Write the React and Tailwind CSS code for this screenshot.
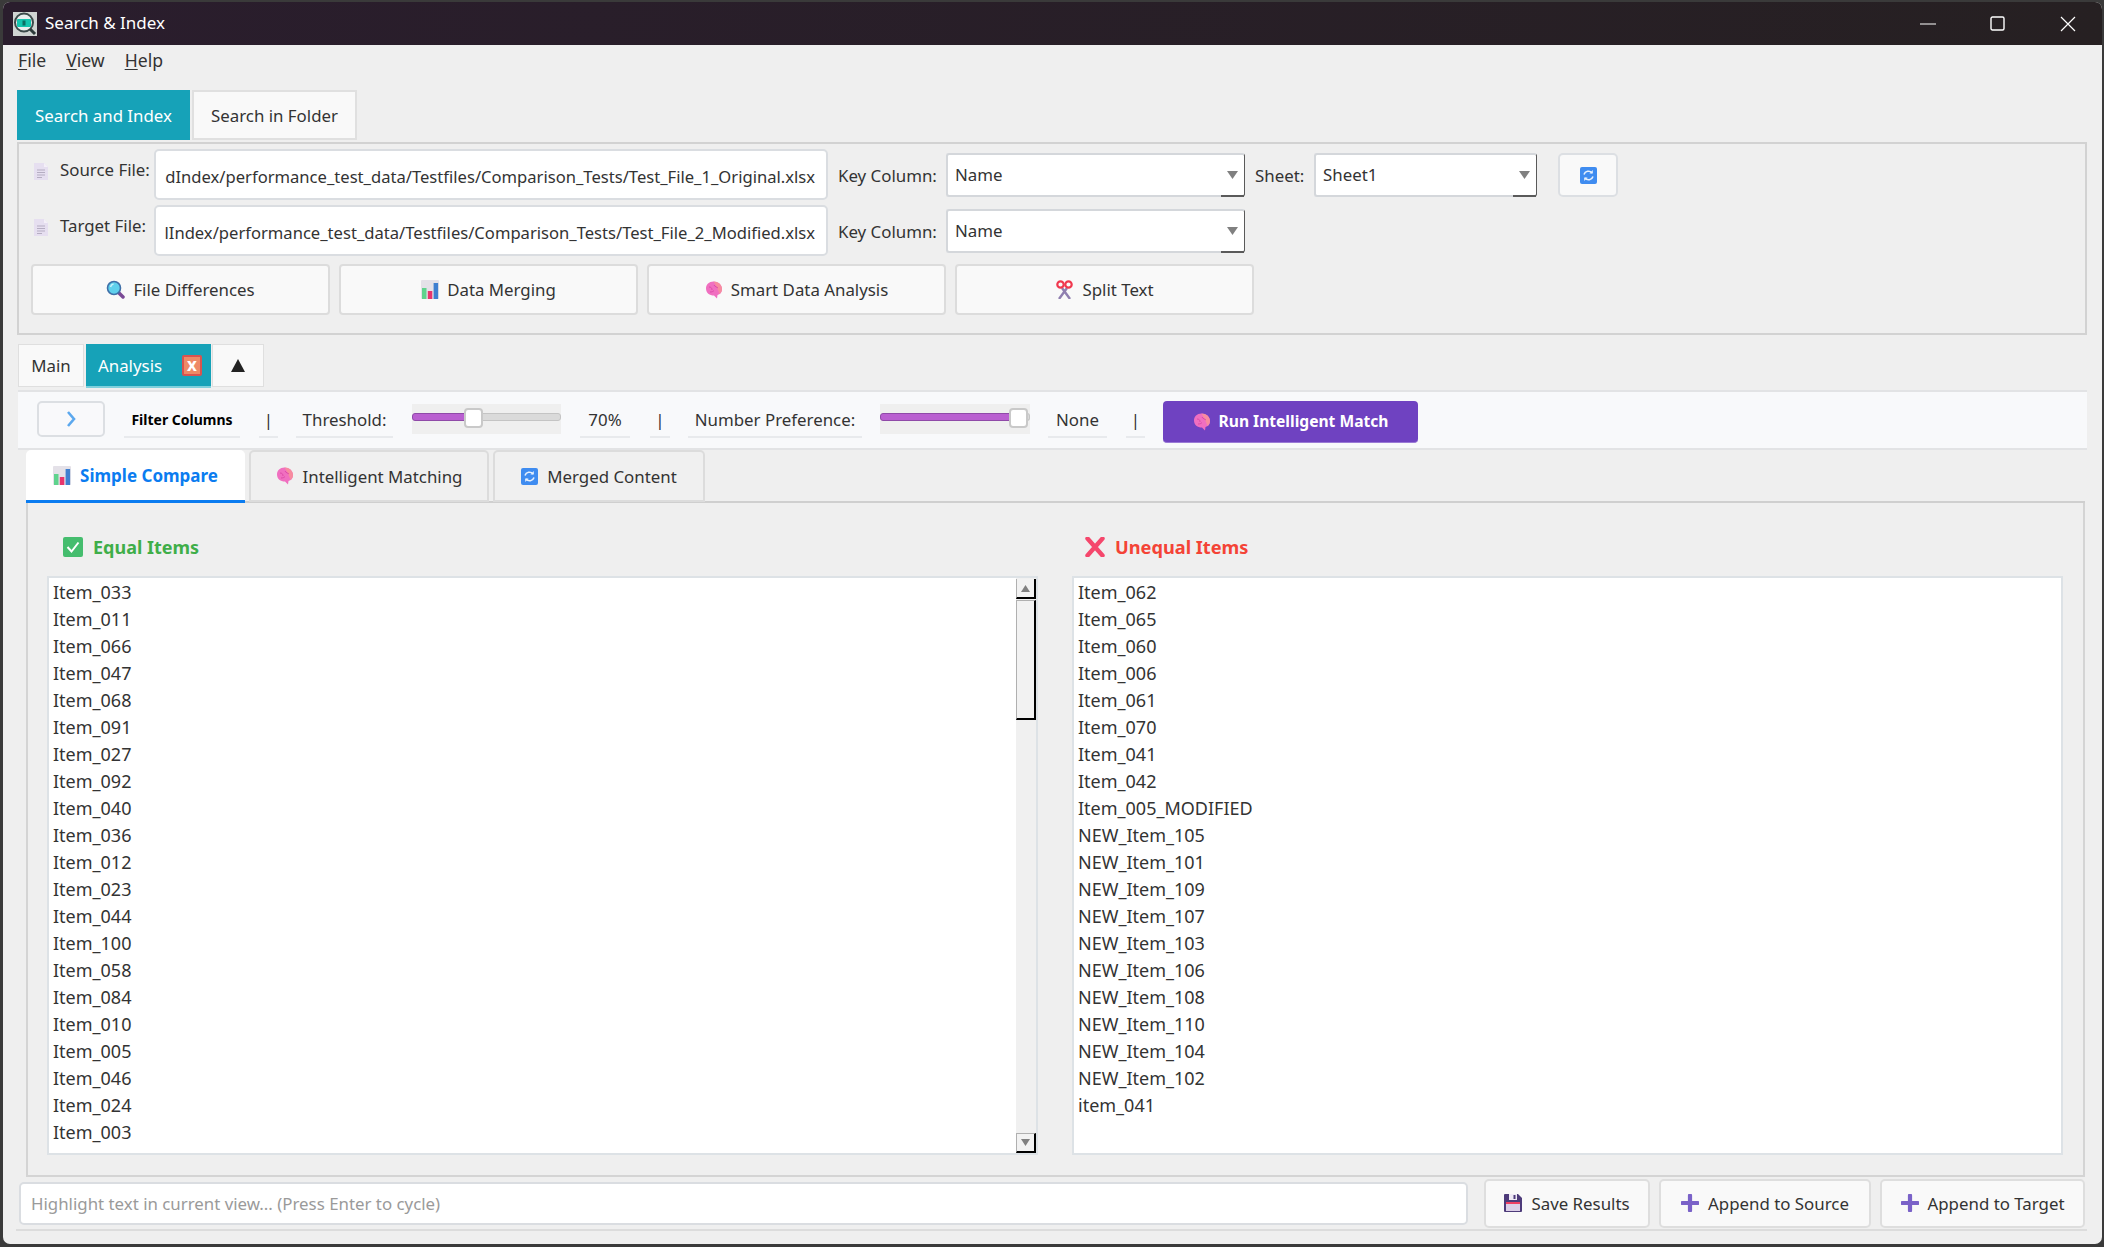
import React from "react";

const equalItems = ["Item_033","Item_011","Item_066","Item_047","Item_068","Item_091","Item_027","Item_092","Item_040","Item_036","Item_012","Item_023","Item_044","Item_100","Item_058","Item_084","Item_010","Item_005","Item_046","Item_024","Item_003","Item_093"];
const unequalItems = ["Item_062","Item_065","Item_060","Item_006","Item_061","Item_070","Item_041","Item_042","Item_005_MODIFIED","NEW_Item_105","NEW_Item_101","NEW_Item_109","NEW_Item_107","NEW_Item_103","NEW_Item_106","NEW_Item_108","NEW_Item_110","NEW_Item_104","NEW_Item_102","item_041"];

const AppIcon = () => (
  <svg width="24" height="24" viewBox="0 0 24 24" className="shrink-0">
    <rect width="24" height="24" fill="#cfd4d2" />
    <circle cx="11" cy="10.5" r="9" fill="#e8eeee" stroke="#3b4a4a" strokeWidth="2" />
    <rect x="4" y="7" width="14" height="8" rx="1" fill="#12c4ae" />
    <rect x="9.5" y="8.5" width="3" height="5" fill="#0b6e64" />
    <path d="M17 17l5 5" stroke="#2c3a3a" strokeWidth="3" />
  </svg>
);

const DocIcon = () => (
  <svg width="14" height="17" viewBox="0 0 14 17" className="shrink-0">
    <path d="M0 0h10l4 4v13H0z" fill="#e6dff0" />
    <path d="M10 0l4 4h-4z" fill="#f4f0f8" />
    <path d="M3 7h8M3 9.5h8M3 12h8M3 14.5h5" stroke="#b5adc2" strokeWidth="1" />
  </svg>
);

const SearchIcon = () => (
  <svg width="19" height="19" viewBox="0 0 19 19" className="shrink-0">
    <path d="M12 12l5 5" stroke="#7a4a96" strokeWidth="3.5" strokeLinecap="round" />
    <circle cx="8" cy="8" r="6.5" fill="#5fd0ec" stroke="#3f6fa8" strokeWidth="1.6" />
    <path d="M4.5 7a4 4 0 0 1 3-3" stroke="#c8f2fb" strokeWidth="1.5" fill="none" />
  </svg>
);

const ChartIcon = () => (
  <svg width="18" height="19" viewBox="0 0 18 19" className="shrink-0">
    <rect width="18" height="19" rx="1" fill="#e4e1e8" />
    <rect x="1" y="8" width="4.5" height="11" fill="#5fd38d" />
    <rect x="6.8" y="11" width="4.5" height="8" fill="#e8356d" />
    <rect x="12.6" y="3" width="4.5" height="16" fill="#3f7fd0" />
  </svg>
);

const BrainIcon = () => (
  <svg width="18" height="18" viewBox="0 0 18 18" className="shrink-0">
    <path d="M8.5 0.5c4.5 0 8.5 3 8.5 7.5 0 3.5-2 5.5-4.5 6l-.5 3.5-3-3C4.5 14.5 1 12 1 7.5 1 3.500 4 0.5 8.5 0.5z" fill="#f06fc0" />
    <path d="M8.5 0.5c4.5 0 8.5 3 8.5 7.5 0 2-1 4-2.5 5C13 8.5 11 4.500 8.5 0.5z" fill="#f78c9f" />
    <path d="M4 6c2 0 3 1 3 3M9 4c1 2 3 2 4 3M5 11c2 0 3-.5 4-1.5" stroke="#dd4aa8" strokeWidth="1" fill="none" />
  </svg>
);

const ScissorsIcon = () => (
  <svg width="19" height="19" viewBox="0 0 19 19" className="shrink-0">
    <path d="M7 8l8 11M12 8L4 19" stroke="#8f7fb0" strokeWidth="2.4" />
    <circle cx="5.5" cy="4.5" r="3.2" fill="none" stroke="#f0384f" strokeWidth="2.2" />
    <circle cx="13.5" cy="4.5" r="3.2" fill="none" stroke="#f0384f" strokeWidth="2.2" />
  </svg>
);

const RefreshIcon = () => (
  <svg width="17" height="17" viewBox="0 0 17 17" className="shrink-0">
    <rect width="17" height="17" rx="2" fill="#3f8cf0" />
    <path d="M4 7.5a4.6 4.6 0 0 1 8-1.5M13 9.5a4.6 4.6 0 0 1-8 1.5" stroke="#e6f0fd" strokeWidth="1.6" fill="none" />
    <path d="M12.8 3v3.6H9.4zM4.2 14v-3.6h3.4z" fill="#e6f0fd" />
  </svg>
);

const CheckIcon = () => (
  <svg width="20" height="20" viewBox="0 0 20 20" className="shrink-0">
    <rect width="20" height="20" rx="2" fill="#45bd6e" />
    <path d="M4.5 10l4 4.5 7-9" stroke="#fff" strokeWidth="2" fill="none" />
  </svg>
);

const CrossIcon = () => (
  <svg width="20" height="20" viewBox="0 0 20 20" className="shrink-0">
    <path d="M2.5 1.5L17.5 18.5M17.5 1.5L2.5 18.5" stroke="#f5476c" strokeWidth="4.4" strokeLinecap="round" />
  </svg>
);

const SaveIcon = () => (
  <svg width="18" height="18" viewBox="0 0 18 18" className="shrink-0">
    <path d="M0 1a1 1 0 0 1 1-1h13l4 4v13a1 1 0 0 1-1 1H1a1 1 0 0 1-1-1z" fill="#4d3b7a" />
    <rect x="5" y="0" width="8" height="6" fill="#efeaf6" />
    <rect x="9.5" y="1" width="2" height="4" fill="#4d3b7a" />
    <rect x="2" y="8" width="14" height="9" fill="#dccfe8" />
    <rect x="2" y="8" width="14" height="2" fill="#ef3f63" />
  </svg>
);

const PlusIcon = () => (
  <svg width="18" height="18" viewBox="0 0 18 18" className="shrink-0">
    <path d="M9 1.5v15M1.5 9h15" stroke="#7a62c8" strokeWidth="4.2" strokeLinecap="round" />
  </svg>
);

const Combo = ({ value, width }) => (
  <div className={`relative flex items-center h-[44px] pl-[7px] pb-[1px] bg-white border-2 border-[#d4d7db] border-r-[#5a5a5a] border-r rounded-[3px] text-[#333] ${width}`}>
    {value}
    <svg width="11" height="8" viewBox="0 0 11 8" className="absolute right-[6px] top-[16px]">
      <path d="M0 0h11L5.5 8z" fill="#808080" />
    </svg>
    <div className="absolute right-0 -bottom-[2px] w-[23px] h-[2px] bg-[#5a5a5a]" />
  </div>
);

const ActionButton = ({ icon, label }) => (
  <div className="flex items-center justify-center gap-[8px] w-[299px] h-[51px] bg-[#f9f9f9] border-2 border-[#dcdcdc] rounded-[4px] text-[#333]">
    {icon}
    {label}
  </div>
);

const FileRow = ({ label, path, children }) => (
  <div className="flex h-[51px]">
    <div className="mt-[14px]"><DocIcon /></div>
    <div className="ml-[12px] mt-[8px] w-[94px] whitespace-nowrap text-[#333]">{label}</div>
    <div className="flex items-center justify-end w-[674px] h-[51px] pt-[3px] pr-[11px] bg-white border-2 border-[#dadde1] rounded-[5px] text-[16.6px] text-[#333] overflow-hidden whitespace-nowrap">
      {path}
    </div>
    <div className="flex items-center h-[46px] mt-[3px]">{children}</div>
  </div>
);

const ToolLabel = ({ children, width, bold }) => (
  <div className={`flex items-center justify-center h-[34px] mt-[12px] pb-[2px] border-b-2 border-[#e8eaed] text-[#333] ${width} ${bold ? "font-bold text-[14px] text-black" : ""}`}>
    {children}
  </div>
);

const Slider = ({ fill, rest, width }) => (
  <div className={`flex items-start h-[30px] mt-[12px] bg-[#efefef] ${width}`}>
    <div className={`h-[8px] mt-[9px] bg-[#b95fd0] border border-[#8f4aa8] rounded-l-[3px] ${fill}`} />
    <div className="w-[19px] h-[20px] mt-[4px] -mx-px bg-white border-2 border-[#c9c9c9] rounded-[4px] z-10" />
    <div className={`h-[8px] mt-[9px] bg-[#dadada] border border-[#c4c4c4] rounded-r-[3px] ${rest}`} />
  </div>
);

const SubTab = ({ icon, label, width, active }) => (
  active ? (
    <div className={`flex items-center justify-center gap-[9px] h-[53px] bg-white border-b-[3px] border-[#0b7cf0] rounded-t-[5px] font-bold text-[17px] text-[#0b7cf0] ${width}`}>
      {icon}
      {label}
    </div>
  ) : (
    <div className={`flex items-center justify-center gap-[9px] h-[52px] bg-[#f0f0f0] border-2 border-[#dcdcdc] rounded-t-[5px] text-[#333] ${width}`}>
      {icon}
      {label}
    </div>
  )
);

const ItemList = ({ items, children }) => (
  <div className="relative w-[991px] h-[579px] bg-white border-2 border-[#dde2e6] overflow-hidden">
    <div className="pl-[4px] pt-[1px] text-[18px] text-[#333]">
      {items.map((item, i) => (
        <div key={i} className="h-[27px] leading-[27px]">{item}</div>
      ))}
    </div>
    {children}
  </div>
);

const ScrollBar = () => (
  <div className="absolute right-0 top-0 bottom-0 flex flex-col w-[20px] bg-[#f0f0f0]">
    <div className="flex items-center justify-center h-[20px] mt-[1px] bg-[#f2f2f2] border-l border-[#b0b0b0] border-r-2 border-r-black border-b-2 border-b-black">
      <svg width="9" height="7" viewBox="0 0 9 7"><path d="M4.5 0L9 7H0z" fill="#808080" /></svg>
    </div>
    <div className="h-[120px] mt-[1px] bg-[#f2f2f2] border-l border-[#b0b0b0] border-t border-t-[#b0b0b0] border-r-2 border-r-black border-b-2 border-b-black" />
    <div className="flex-1" />
    <div className="flex items-center justify-center h-[20px] bg-[#f2f2f2] border-l border-[#b0b0b0] border-t border-t-[#b0b0b0] border-r-2 border-r-black border-b-2 border-b-black">
      <svg width="9" height="7" viewBox="0 0 9 7"><path d="M0 0h9L4.5 7z" fill="#808080" /></svg>
    </div>
  </div>
);

const BottomButton = ({ icon, label, width }) => (
  <div className={`flex items-center justify-center gap-[9px] h-[49px] bg-[#f9f9f9] border-2 border-[#dedede] rounded-[5px] text-[#333] ${width}`}>
    {icon}
    {label}
  </div>
);

export default function App() {
  return (
    <div className="w-[2104px] h-[1247px] pt-[2px] pr-[2px] pb-[3px] pl-[3px] bg-[#3a3a3a] overflow-hidden font-['Noto_Sans',sans-serif] text-[16.85px] leading-[25px]">
      <div className="flex flex-col h-full bg-[#efefef] rounded-[7px] overflow-hidden">
        {/* title bar */}
        <div className="flex items-center h-[43px] pl-[10px] bg-gradient-to-r from-[#2a1d2d] to-[#262022] text-white shrink-0">
          <AppIcon />
          <span className="ml-[8px] mb-[2px] text-[17px]">Search &amp; Index</span>
          <div className="flex-1" />
          <svg width="16" height="2" viewBox="0 0 16 2"><path d="M0 1h16" stroke="#fff" /></svg>
          <svg width="15" height="15" viewBox="0 0 15 15" className="ml-[54px]"><rect x="1" y="1" width="13" height="13" rx="1.5" fill="none" stroke="#fff" strokeWidth="1.4" /></svg>
          <svg width="16" height="16" viewBox="0 0 16 16" className="ml-[55px] mr-[26px]"><path d="M1 1l14 14M15 1L1 15" stroke="#fff" strokeWidth="1.2" /></svg>
        </div>

        {/* menu */}
        <div className="flex items-start gap-[20px] h-[45px] pt-[3px] pl-[15px] text-[17.6px] text-[#333] shrink-0">
          <span><span className="underline underline-offset-2">F</span>ile</span>
          <span><span className="underline underline-offset-2">V</span>iew</span>
          <span><span className="underline underline-offset-2">H</span>elp</span>
        </div>

        {/* outer tabs */}
        <div className="flex h-[52px] ml-[14px] shrink-0">
          <div className="flex items-center justify-center w-[173px] h-[50px] pt-[1px] bg-[#16a2b8] text-white">Search and Index</div>
          <div className="flex items-center justify-center w-[165px] h-[50px] ml-[2px] pt-[1px] bg-[#f9f9f9] border-2 border-[#e0e0e0] text-[#333]">Search in Folder</div>
        </div>

        {/* file pane */}
        <div className="flex flex-col h-[193px] ml-[14px] mr-[15px] pt-[5px] pl-[15px] border-2 border-[#d2d2d2] shrink-0">
          <FileRow label="Source File:" path="dIndex/performance_test_data/Testfiles/Comparison_Tests/Test_File_1_Original.xlsx">
            <span className="ml-[10px] w-[108px] whitespace-nowrap text-[#333]">Key Column:</span>
            <Combo value="Name" width="w-[299px]" />
            <span className="ml-[10px] w-[59px] text-[#333]">Sheet:</span>
            <Combo value="Sheet1" width="w-[223px]" />
            <div className="flex items-center justify-center w-[60px] h-[44px] ml-[21px] bg-[#f9f9f9] border-2 border-[#dcdfe3] rounded-[5px]">
              <RefreshIcon />
            </div>
          </FileRow>
          <div className="mt-[5px]">
            <FileRow label="Target File:" path="lIndex/performance_test_data/Testfiles/Comparison_Tests/Test_File_2_Modified.xlsx">
              <span className="ml-[10px] w-[108px] whitespace-nowrap text-[#333]">Key Column:</span>
              <Combo value="Name" width="w-[299px]" />
            </FileRow>
          </div>
          <div className="flex gap-[9px] mt-[8px] -ml-[3px]">
            <ActionButton icon={<SearchIcon />} label="File Differences" />
            <ActionButton icon={<ChartIcon />} label="Data Merging" />
            <ActionButton icon={<BrainIcon />} label="Smart Data Analysis" />
            <ActionButton icon={<ScissorsIcon />} label="Split Text" />
          </div>
        </div>

        {/* analysis tabs */}
        <div className="flex h-[44px] mt-[9px] ml-[15px] shrink-0">
          <div className="flex items-center justify-center w-[66px] h-[43px] bg-[#f9f9f9] border border-[#dfdfdf] text-[#333]">Main</div>
          <div className="flex items-center justify-between w-[125px] h-[44px] ml-[2px] pl-[12px] pr-[9px] bg-[#16a2b8] border-b-2 border-[#7fd0dc] text-white">
            Analysis
            <span className="flex items-center justify-center w-[20px] h-[21px] pb-[2px] bg-[#ee8a66] border-2 border-[#d9534f] rounded-[2px] font-bold text-[17px] leading-none">x</span>
          </div>
          <div className="flex items-center justify-center w-[52px] h-[43px] ml-px bg-[#f9f9f9] border border-[#dfdfdf]">
            <svg width="14" height="13" viewBox="0 0 14 13"><path d="M7 0l7 13H0z" fill="#222" /></svg>
          </div>
        </div>

        {/* toolbar */}
        <div className="flex items-start h-[60px] mt-[2px] ml-[15px] mr-[15px] bg-[#f8f9fb] border-t-2 border-b-2 border-[#e2e3e5] shrink-0">
          <div className="flex items-center justify-center w-[68px] h-[36px] mt-[9px] ml-[19px] bg-[#f9f9fb] border-2 border-[#dcdfe3] rounded-[5px]">
            <svg width="10" height="18" viewBox="0 0 10 18"><path d="M2 2l6 7-6 7" stroke="#5ca8ee" strokeWidth="2.6" fill="none" /></svg>
          </div>
          <div className="w-[19px]" />
          <ToolLabel width="w-[116px]" bold>Filter Columns</ToolLabel>
          <div className="w-[19px]" />
          <ToolLabel width="w-[19px]">|</ToolLabel>
          <div className="w-[18px]" />
          <ToolLabel width="w-[97px]">Threshold:</ToolLabel>
          <div className="w-[19px]" />
          <Slider width="w-[149px]" fill="w-[53px]" rest="w-[79px]" />
          <div className="w-[19px]" />
          <ToolLabel width="w-[50px]">70%</ToolLabel>
          <div className="w-[20px]" />
          <ToolLabel width="w-[20px]">|</ToolLabel>
          <div className="w-[18px]" />
          <ToolLabel width="w-[174px]">Number Preference:</ToolLabel>
          <div className="w-[18px]" />
          <Slider width="w-[150px]" fill="w-[130px]" rest="w-[3px]" />
          <div className="w-[18px]" />
          <ToolLabel width="w-[59px]">None</ToolLabel>
          <div className="w-[19px]" />
          <ToolLabel width="w-[19px]">|</ToolLabel>
          <div className="w-[18px]" />
          <div className="flex items-center justify-center gap-[8px] w-[255px] h-[42px] mt-[9px] bg-[#6f42c1] border-b border-[#9a7ad6] rounded-[4px] font-bold text-[15.6px] text-white">
            <BrainIcon />
            Run Intelligent Match
          </div>
        </div>

        {/* sub tabs */}
        <div className="flex gap-[4px] h-[53px] ml-[23px] mr-[17px] border-b-2 border-[#cfcfcf] shrink-0">
          <SubTab active icon={<ChartIcon />} label="Simple Compare" width="w-[219px]" />
          <SubTab icon={<BrainIcon />} label="Intelligent Matching" width="w-[240px]" />
          <SubTab icon={<RefreshIcon />} label="Merged Content" width="w-[212px]" />
        </div>

        {/* compare panel */}
        <div className="flex gap-[34px] h-[674px] ml-[23px] mr-[17px] pt-[33px] pl-[19px] pr-[21px] border-l-2 border-r-2 border-b-2 border-[#d4d4d4] shrink-0">
          <div className="flex flex-col w-[991px]">
            <div className="flex items-center gap-[10px] h-[22px] ml-[16px] mb-[18px] font-bold text-[18px] text-[#3fae49]">
              <CheckIcon />
              Equal Items
            </div>
            <ItemList items={equalItems}>
              <ScrollBar />
            </ItemList>
          </div>
          <div className="flex flex-col w-[991px]">
            <div className="flex items-center gap-[10px] h-[22px] ml-[13px] mb-[18px] font-bold text-[18.2px] text-[#f44336]">
              <CrossIcon />
              Unequal Items
            </div>
            <ItemList items={unequalItems} />
          </div>
        </div>

        {/* bottom row */}
        <div className="flex items-center h-[54px] ml-[13px] mr-[15px] pl-[4px] border-b-2 border-[#dcdcdc] shrink-0">
          <div className="flex items-center w-[1449px] h-[43px] -ml-[1px] pl-[10px] bg-white border-2 border-[#dadde1] rounded-[5px] text-[#9a9a9a]">
            Highlight text in current view... (Press Enter to cycle)
          </div>
          <div className="flex gap-[9px] ml-[16px]">
            <BottomButton icon={<SaveIcon />} label="Save Results" width="w-[166px]" />
            <BottomButton icon={<PlusIcon />} label="Append to Source" width="w-[212px]" />
            <BottomButton icon={<PlusIcon />} label="Append to Target" width="w-[205px]" />
          </div>
        </div>
      </div>
    </div>
  );
}
